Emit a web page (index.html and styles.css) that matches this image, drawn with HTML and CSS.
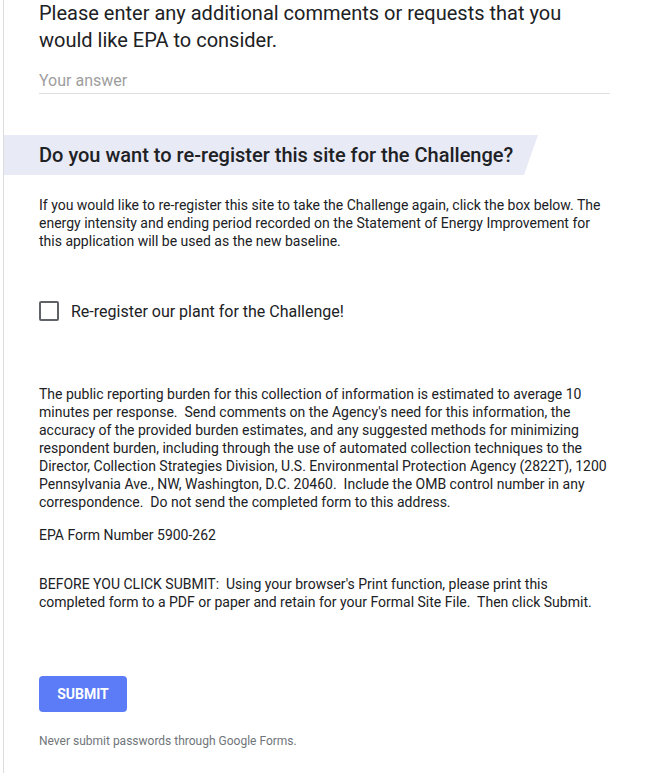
FILE: index.html
```html
<!DOCTYPE html>
<html lang="en">
<head>
    <meta charset="UTF-8">
    <meta name="viewport" content="width=device-width, initial-scale=1.0">
    <title>EPA Challenge Form</title>
    <link rel="stylesheet" href="styles.css">
</head>
<body>
    <div class="form-card">
        <div class="question">
            <div class="question-title">Please enter any additional comments or requests that you would like EPA to consider.</div>
            <div class="answer-line">Your answer</div>
        </div>

        <div class="section-header">
            <h2>Do you want to re-register this site for the Challenge?</h2>
        </div>

        <p class="section-desc">If you would like to re-register this site to take the Challenge again, click the box below. The energy intensity and ending period recorded on the Statement of Energy Improvement for this application will be used as the new baseline.</p>

        <label class="check-row">
            <span class="check-box"></span>
            <span>Re-register our plant for the Challenge!</span>
        </label>

        <p class="notice">The public reporting burden for this collection of information is estimated to average 10 minutes per response.&nbsp; Send comments on the Agency's need for this information, the accuracy of the provided burden estimates, and any suggested methods for minimizing respondent burden, including through the use of automated collection techniques to the Director, Collection Strategies Division, U.S. Environmental Protection Agency (2822T), 1200 Pennsylvania Ave., NW, Washington, D.C. 20460.&nbsp; Include the OMB control number in any correspondence.&nbsp; Do not send the completed form to this address.</p>

        <p class="notice">EPA Form Number 5900-262</p>

        <p class="notice before-submit">BEFORE YOU CLICK SUBMIT:&nbsp; Using your browser's Print function, please print this completed form to a PDF or paper and retain for your Formal Site File.&nbsp; Then click Submit.</p>

        <button type="submit" class="submit-button">SUBMIT</button>

        <p class="footer-note">Never submit passwords through Google Forms.</p>
    </div>
</body>
</html>
```

FILE: styles.css
```css
body {
    margin: 0;
    padding: 0;
    background-color: #fff;
    font-family: Roboto, Arial, sans-serif;
    color: #202124;
}

.form-card {
    margin-left: 3px;
    border-left: 1px solid #dadce0;
    min-height: 773px;
    padding-bottom: 20px;
}

.question {
    padding: 0 35px 0 35px;
}

.question-title {
    font-size: 20px;
    line-height: 27px;
    width: 540px;
}

.answer-line {
    margin-top: 16px;
    font-size: 16px;
    line-height: 22px;
    color: #9e9e9e;
    padding-bottom: 1px;
    border-bottom: 1px solid #e0e0e0;
}

.section-header {
    margin-top: 41px;
    width: 534px;
    height: 40px;
    background-color: #e8eaf6;
    clip-path: polygon(0 0, 100% 0, calc(100% - 14px) 100%, 0 100%);
    display: flex;
    align-items: center;
}

.section-header h2 {
    margin: 0;
    padding-left: 35px;
    font-size: 20px;
    font-weight: 500;
}

.section-desc {
    margin: 21px 35px 0 35px;
    font-size: 14px;
    line-height: 18px;
}

.check-row {
    display: flex;
    align-items: center;
    margin: 51px 35px 0 35px;
    font-size: 16px;
    cursor: pointer;
}

.check-box {
    width: 16px;
    height: 16px;
    border: 2px solid #5f6368;
    border-radius: 2px;
    margin-right: 12px;
}

.notice {
    margin: 0 35px;
    font-size: 14px;
    line-height: 18px;
}

.check-row + .notice {
    margin-top: 64px;
}

.notice + .notice {
    margin-top: 15px;
}

.notice.before-submit {
    margin-top: 31px;
}

.submit-button {
    display: block;
    margin: 65px 0 0 35px;
    width: 88px;
    height: 36px;
    border: none;
    border-radius: 4px;
    background-color: #5b7cf6;
    color: #fff;
    font-family: Roboto, Arial, sans-serif;
    font-size: 14px;
    font-weight: bold;
    cursor: pointer;
}

.footer-note {
    margin: 22px 35px 0 35px;
    font-size: 12px;
    color: #70757a;
}
```
